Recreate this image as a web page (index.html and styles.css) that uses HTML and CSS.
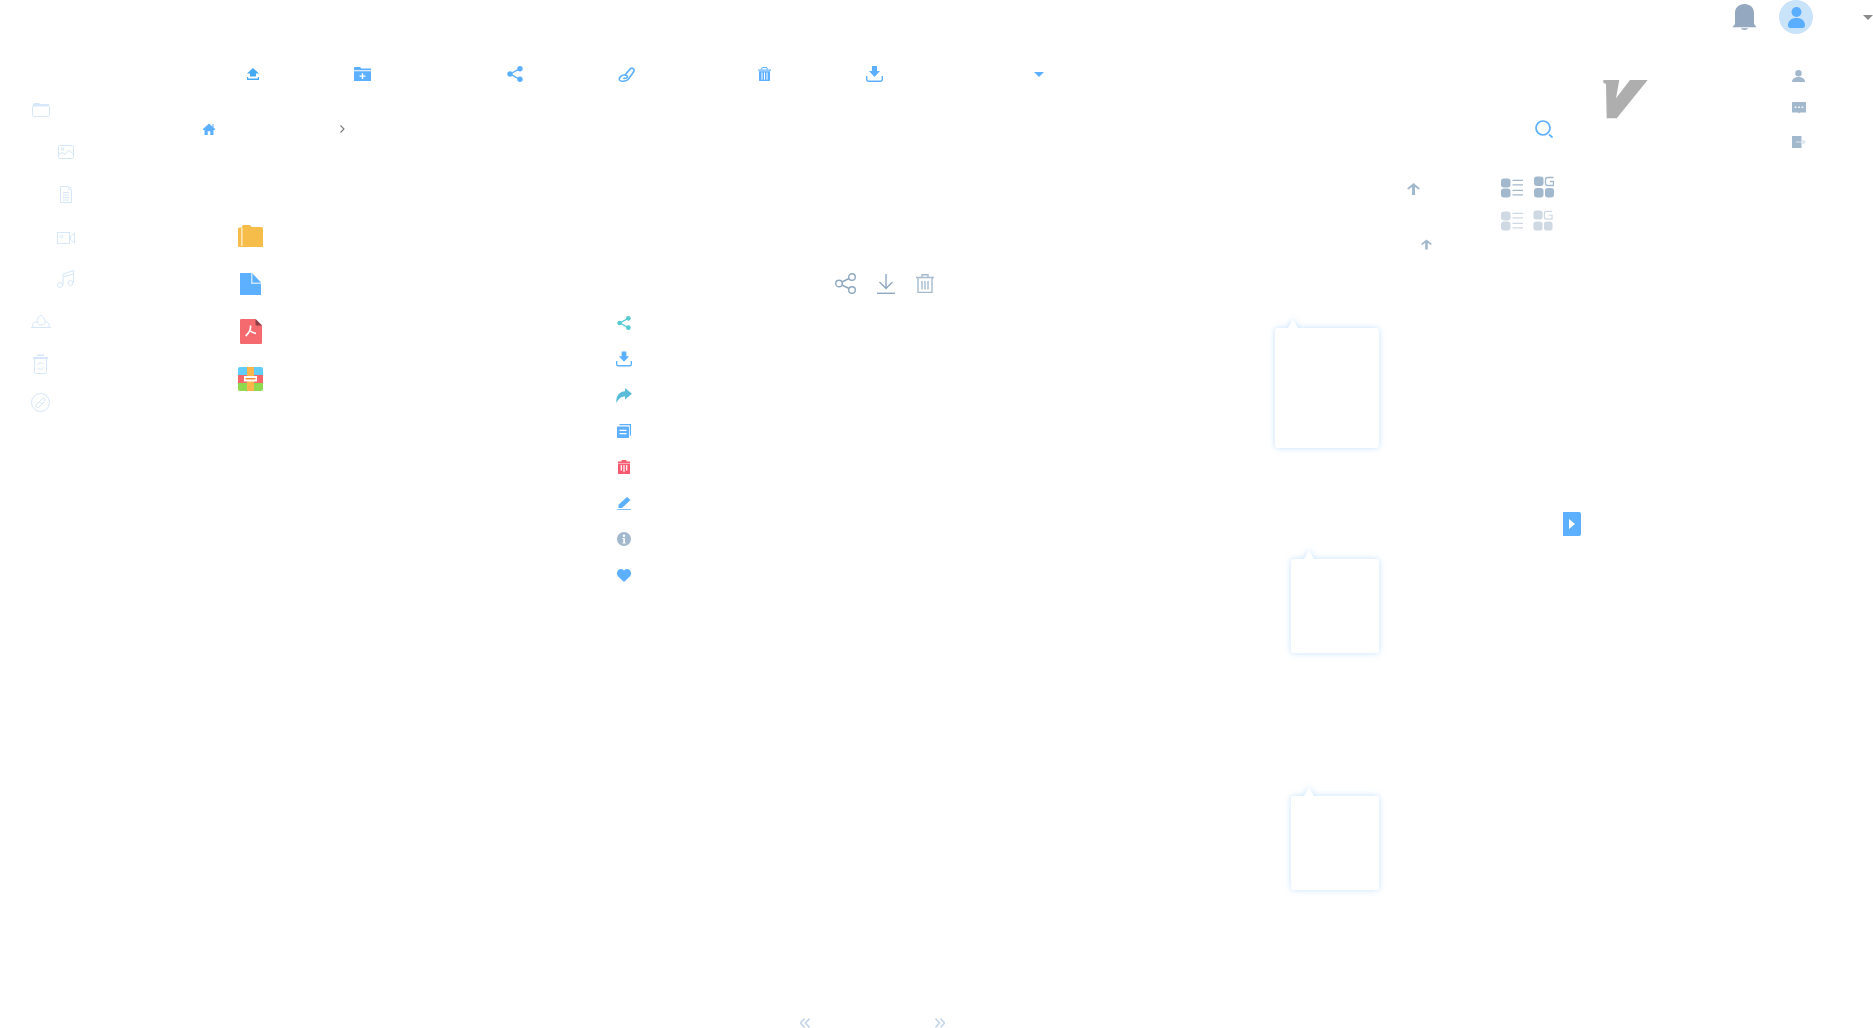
FILE: index.html
```html
<!DOCTYPE html>
<html lang="zh">
<head>
  <meta charset="UTF-8" />
  <meta name="viewport" content="width=device-width, initial-scale=1.0"/>
  <title>Files</title>
  <link rel="stylesheet" href="styles.css">
</head>
<body>
  <header class="topbar">
    <svg class="bell" width="25" height="26" viewBox="0 0 25 26"><path d="M3 19V9C3 3.500 7 0 12.500 0S22 3.500 22 9V19C22 21 23.500 21.500 24.800 23.300H.2C1.500 21.500 3 21 3 19z"/><path d="M9 24.300H16C15.500 26.500 9.500 26.500 9 24.300z"/></svg>
    <div class="avatar">
      <svg width="17" height="21" viewBox="0 0 17 21"><circle cx="8.500" cy="5" r="5"/><path d="M0 18.500C0 13.500 3.500 11 8.500 11S17 13.500 17 18.500C17 20 16 21 14.500 21H2.500C1 21 0 20 0 18.500z"/></svg>
    </div>
    <svg class="top-caret" width="10" height="5" viewBox="0 0 10 5"><path d="M0 0H10L5 5z"/></svg>
  </header>

  <div class="layout">
    <!-- sidebar -->
    <nav class="sidebar">
      <div class="nav-item nav-folder"><svg width="18" height="14" viewBox="0 0 18 14"><path class="nav-fill" d="M1 1.500C1 .5 2 0 3 0H7L8 1H16C17 1 17.500 2 17.500 3.500H.5z"/><path d="M.5 3.500V12C.5 13 1.500 13.500 2.500 13.500H15.500C16.500 13.500 17.500 13 17.500 12V3.500"/></svg></div>
      <div class="nav-item nav-sub nav-image"><svg width="16" height="14" viewBox="0 0 16 14"><rect x=".5" y=".5" width="15" height="13" rx="1"/><circle cx="4.500" cy="4" r="1.300"/><path d="M.5 10L4 7.500L7 9.500L11 5L15.500 9.500"/></svg></div>
      <div class="nav-item nav-sub nav-doc"><svg width="12" height="17" viewBox="0 0 12 17"><path d="M.5 .5H8.500L11.500 3.500V16.500H.5z"/><path d="M3 6.500H9M3 9H9M3 11.500H9M3 14H9"/><circle cx="9.500" cy="2.500" r="1.200"/></svg></div>
      <div class="nav-item nav-sub nav-video"><svg width="18" height="12" viewBox="0 0 18 12"><rect x=".5" y=".5" width="12" height="11"/><circle cx="4.500" cy="4.500" r="1.500"/><path d="M17.500 1L13.500 4.500V7.500L17.500 11z"/></svg></div>
      <div class="nav-item nav-sub"><svg width="17" height="18" viewBox="0 0 17 18"><path d="M6 15V4L16.500 .5V12.500"/><circle cx="3" cy="15" r="2.500"/><circle cx="13.500" cy="13" r="2.500"/><path d="M6 7L16.500 4"/></svg></div>
      <div class="nav-item"><svg width="20" height="13" viewBox="0 0 20 13"><path d="M0 12.500H20"/><path d="M2 12C1 9 3 6.500 6 7C6.500 3 8 .5 10 .5S13.500 3 14 7C17 6.500 19 9 18 12"/><path d="M6 7C6.500 9 8 10 10 10S13.500 9 14 7"/></svg></div>
      <div class="nav-item nav-bin"><svg width="15" height="20" viewBox="0 0 15 20"><path class="nav-fill" d="M0 3H15V5H0zM4 .5H11V2H4z"/><path d="M1.500 5V18.500C1.500 19 2 19.500 2.500 19.500H12.500C13 19.500 13.500 19 13.500 18.500V5"/><path d="M4.500 11C5 8.500 9 8 10.500 10M10.500 13C10 15.500 6 16 4.500 14"/></svg></div>
      <div class="nav-item nav-link"><svg width="19" height="19" viewBox="0 0 19 19"><circle cx="9.500" cy="9.500" r="9"/><path d="M5.500 11.500L11 6C13 4.500 15 6.500 13.500 8.500L8 14C6 15.500 4 13.500 5.500 11.500zM8.500 8.500L11 11"/></svg></div>
    </nav>

    <main class="main">
      <div class="toolbar">
        <svg class="blue-deep" width="12" height="12" viewBox="0 0 12 12"><path d="M6 0L12 5.500H9V8.500H3V5.500H0z"/><path class="tray" d="M.5 9V11.300H11.500V9"/></svg>
        <svg class="blue" width="17" height="14" viewBox="0 0 17 14"><path d="M0 1C0 .4 .4 0 1 0H6L7.500 1.500H17V3.300H0z"/><path fill-rule="evenodd" d="M0 4.300H17V14H0zM7.800 6.200V8.500H5.500V9.800H7.800V12.100H9.200V9.800H11.500V8.500H9.200V6.200z"/></svg>
        <svg class="blue" width="16" height="16" viewBox="0 0 16 16"><circle cx="13" cy="2.700" r="2.700"/><circle cx="3" cy="8" r="2.700"/><circle cx="13" cy="13.300" r="2.700"/><path class="tray" d="M13 2.700L3 8L13 13.300"/></svg>
        <svg class="blue" width="17" height="15" viewBox="0 0 17 15"><path class="link-stroke" d="M6.500 8.500L12.500 1.700C14 .5 16.500 1.500 16 4C15.500 5.500 12 10 10 12.500C8 14.500 2.500 15 1.500 13C.5 10.500 4 7.500 7 8C9 8.300 10 9.500 9 10.500C8 11.500 6 11.500 5.500 11"/></svg>
        <svg class="blue" width="13" height="14" viewBox="0 0 13 14"><path d="M3 2.500C3 .5 4.500 0 6.500 0S10 .5 10 2.500L9 2.500C9 1.300 8 1 6.500 1S4 1.300 4 2.500z"/><path d="M0 2.500H13V3.700H0z"/><path fill-rule="evenodd" d="M1 4.300H12V13C12 13.600 11.600 14 11 14H2C1.400 14 1 13.600 1 13zM3.500 5.500V12.800H4.500V5.500zM6 5.500V12.800H7V5.500zM8.500 5.500V12.800H9.500V5.500z"/></svg>
        <svg class="blue" width="17" height="16" viewBox="0 0 17 16"><path d="M6 0H11V5H14L8.500 11L3 5H6z"/><path class="tray" d="M.7 10V13.500C.7 14.500 1.300 15.200 2.300 15.200H14.700C15.700 15.200 16.300 14.500 16.300 13.500V10"/></svg>
        <svg class="blue" width="10" height="5" viewBox="0 0 10 5"><path d="M0 0H10L5 5z"/></svg>
      </div>

      <div class="crumbs">
        <svg class="blue" width="12" height="12" viewBox="0 0 12 12"><path d="M6 .5L0 6V7H1.500V12H4.700V8.200H7.300V12H10.500V7H12V6L10.500 4.600V1H9.500V3.700z"/></svg>
        <svg class="chevron" width="5" height="8" viewBox="0 0 5 8"><path d="M.5 .5L4 4L.5 7.500"/></svg>
        <svg class="search" width="18" height="18" viewBox="0 0 18 18"><circle cx="8" cy="8" r="7"/><path d="M14 14.500L17.500 17.500"/></svg>
      </div>

      <div class="sortbar">
        <svg class="sort-arrow slate" width="13" height="12" viewBox="0 0 13 12"><path d="M6.500 0L13 5.500L11.500 6.500L8 4V12H5V4L1.500 6.500L0 5.500z"/></svg>
        <svg class="slate view-list" width="22" height="20" viewBox="0 0 22 20"><rect y=".5" width="9.500" height="9" rx="3"/><rect y="10.500" width="9.500" height="9" rx="3"/><path class="view-lines" d="M11.500 2.300H22M11.500 6.800H22M11.500 12.300H22M11.500 16.800H22"/></svg>
        <svg class="slate" width="20" height="22" viewBox="0 0 20 22"><rect y=".5" width="9.500" height="9.500" rx="3"/><rect y="12" width="9.500" height="9.500" rx="3"/><rect x="11" y="12" width="9" height="9.500" rx="3"/><path class="view-lines" d="M19.500 1.500H13.500C12 1.500 11.500 2.500 11.500 4V7C11.500 8.500 12 9.500 13.500 9.500H19.500V5.500H16"/></svg>
      </div>

      <div class="files">
        <div class="file-row">
          <svg width="25" height="22" viewBox="0 0 25 22"><path fill="#f6bd4a" d="M0 4C0 3 .8 2.500 1.500 2.500H4V1.500C4 .5 5 0 6 0H11C12.500 0 13 1 13.500 2H23.500C24.500 2 25 3 25 4V20.500C25 21.500 24.500 22 23.500 22H1.500C.5 22 0 21.500 0 20.500z"/><path fill="#fbe3b2" d="M3 2.500H4.700V21H3z"/></svg>
        </div>
        <div class="file-row">
          <svg class="file-doc" width="21" height="22" viewBox="0 0 21 22"><path fill="#5cb0ff" d="M0 0H11V11H21V22H0z"/><path fill="#5cb0ff" d="M11 0H12L21 9.500V11H11z"/><path fill="#c8e3ff" d="M11 0H12.500V9.500H21V11H11z"/></svg>
          <div class="row-actions">
            <svg class="outline" width="21" height="21" viewBox="0 0 21 21"><circle cx="17" cy="4" r="3.300"/><circle cx="4" cy="10.500" r="3.300"/><circle cx="17" cy="17" r="3.300"/><path d="M14 5.500L7 9M7 12L14 15.500"/></svg>
            <svg class="outline" width="18" height="20" viewBox="0 0 18 20"><path d="M9 0V14.500M2.500 8L9 14.500L15.500 8"/><path d="M0 19.300H18"/></svg>
            <svg class="outline outline-bin" width="18" height="19" viewBox="0 0 18 19"><path d="M0 3.500H18M6 3.500V.7H12V3.500"/><path d="M2 3.500V18.500H16V3.500"/><path d="M6 7V15.500M9 7V15.500M12 7V15.500"/></svg>
          </div>
        </div>
        <div class="file-row">
          <svg class="file-doc" width="22" height="25" viewBox="0 0 22 25"><path fill="#f56a6f" d="M1.500 0H15.500L22 6.500V23.500C22 24.500 21.500 25 20.500 25H1.500C.5 25 0 24.500 0 23.500V1.500C0 .5 .5 0 1.500 0z"/><path fill="#8a4046" d="M15.500 0L22 6.500H17C16 6.500 15.500 6 15.500 5z"/><path fill="none" stroke="#fff" stroke-width="1.700" d="M10.500 6.500C11 10 9 14 5.700 17M10.500 12C12 13.500 14 14 16 14.500"/></svg>
        </div>
        <div class="file-row">
          <svg width="25" height="24" viewBox="0 0 25 24"><path fill="#5fcdf8" d="M2 0H23C24.300 0 25 .7 25 2V8H0V2C0 .7 .7 0 2 0z"/><path fill="#f5676b" d="M0 8H25V16H0z"/><path fill="#8fd94f" d="M0 16H25V22C25 23.300 24.300 24 23 24H2C.7 24 0 23.300 0 22z"/><path fill="#fdb54c" d="M9 0H16V24H9z"/><path fill="#fff" d="M6 9H19V14.500H6z"/><path fill="#f98c3a" d="M7.500 11H17.500V12.500H7.500z"/></svg>
        </div>
      </div>

      <div class="pager">
        <svg class="pager-icon" width="10" height="10" viewBox="0 0 10 10"><path d="M4.500 .5L.5 5L4.500 9.500M9.500 .5L5.500 5L9.500 9.500"/></svg>
        <svg class="pager-icon" width="10" height="10" viewBox="0 0 10 10"><path d="M.5 .5L4.500 5L.5 9.500M5.500 .5L9.500 5L5.500 9.500"/></svg>
      </div>
    </main>
  </div>

  <!-- things lying over the page -->
  <svg class="logo" width="45" height="39" viewBox="0 0 45 39"><path d="M.3 0H16.300L13 18.300L27 0H44.700L13.700 38.300H3.700L3 4L.3 2.700z"/></svg>

  <div class="user-menu">
    <svg class="slate" width="13" height="12" viewBox="0 0 13 12"><circle cx="6.500" cy="3.200" r="3.200"/><path d="M0 12C0 8.500 3 7 6.500 7S13 8.500 13 12z"/></svg>
    <svg class="slate" width="14" height="12" viewBox="0 0 14 12"><path fill-rule="evenodd" d="M1 0H13C13.600 0 14 .4 14 1V10C14 10.400 13.600 10.500 13 10.500H8L7 11.500L6 10.500H1C.4 10.500 0 10.400 0 10V1C0 .4 .4 0 1 0zM2.700 4.500V6H4.300V4.500zM6.200 4.500V6H7.800V4.500zM9.700 4.500V6H11.300V4.500z"/></svg>
    <svg class="slate menu-exit" width="14" height="12" viewBox="0 0 14 12"><path d="M0 0H9.500V12H0z"/><path class="exit-arrow" d="M4 6H12.500M10.500 4L13 6L10.500 8"/></svg>
  </div>

  <div class="context-menu">
    <div class="context-item"><svg class="teal" width="14" height="14" viewBox="0 0 16 16"><circle cx="13" cy="2.700" r="2.700"/><circle cx="3" cy="8" r="2.700"/><circle cx="13" cy="13.300" r="2.700"/><path class="tray" d="M13 2.700L3 8L13 13.300"/></svg></div>
    <div class="context-item"><svg class="blue" width="16" height="16" viewBox="0 0 17 16"><path d="M6 0H11V5H14L8.500 11L3 5H6z"/><path class="tray" d="M.7 10V13.500C.7 14.500 1.300 15.200 2.300 15.200H14.700C15.700 15.200 16.300 14.500 16.300 13.500V10"/></svg></div>
    <div class="context-item"><svg class="forward" width="16" height="15" viewBox="0 0 16 15"><path d="M9 0L16 5.800L9 11.500V8.500C5.500 8.500 2.500 10.500 .5 15C-.5 8 3.500 3.500 9 3.200z"/></svg></div>
    <div class="context-item"><svg class="blue" width="14" height="14" viewBox="0 0 14 14"><path fill-rule="evenodd" d="M1 2.500H11C11.600 2.500 12 2.900 12 3.500V13C12 13.600 11.600 14 11 14H1C.4 14 0 13.600 0 13V3.500C0 2.900 .4 2.500 1 2.500zM2.500 5.800V7H9.500V5.800zM2.500 9V10.200H9.500V9z"/><path class="tray" d="M2.500 .5H13.500V11.500"/></svg></div>
    <div class="context-item"><svg class="red" width="12" height="14" viewBox="0 0 12 14"><path d="M3.500 0H8.500V1.500H12V3H0V1.500H3.500z"/><path fill-rule="evenodd" d="M0 3.500H12V14H0zM2.700 5V10.500H3.900V5zM5.400 5V12H6.600V5zM8.100 5V10.500H9.300V5z"/></svg></div>
    <div class="context-item"><svg class="blue" width="14" height="13" viewBox="0 0 14 13"><path d="M10 0L13.500 3L5 11H1.500V7.800z"/><path d="M0 12.200H14V13H0z"/></svg></div>
    <div class="context-item"><svg class="slate" width="14" height="14" viewBox="0 0 14 14"><path fill-rule="evenodd" d="M7 0A7 7 0 1 1 7 14A7 7 0 1 1 7 0zM7 2.500A1.300 1.300 0 1 0 7 5.100A1.300 1.300 0 1 0 7 2.500zM5.500 6V7H6.300V10.500H5.500V11.500H8.800V10.500H8V6z"/></svg></div>
    <div class="context-item"><svg class="blue" width="14" height="13" viewBox="0 0 14 13"><path d="M7 13L1.200 7.500C-1.500 4.500 .5 0 4 0C5.300 0 6.300 .7 7 1.500C7.700 .7 8.700 0 10 0C13.500 0 15.500 4.500 12.800 7.500z"/></svg></div>
  </div>

  <div class="view-menu">
    <svg class="view-list" width="22" height="20" viewBox="0 0 22 20"><rect y=".5" width="9.500" height="9" rx="3"/><rect y="10.500" width="9.500" height="9" rx="3"/><path class="view-lines" d="M11.500 2.300H22M11.500 6.800H22M11.500 12.300H22M11.500 16.800H22"/></svg>
    <svg width="20" height="21" viewBox="0 0 20 22"><rect y=".5" width="9.500" height="9.500" rx="3"/><rect y="12" width="9.500" height="9.500" rx="3"/><rect x="11" y="12" width="9" height="9.500" rx="3"/><path class="view-lines" d="M19.500 1.500H13.500C12 1.500 11.500 2.500 11.500 4V7C11.500 8.500 12 9.500 13.500 9.500H19.500V5.500H16"/></svg>
  </div>
  <svg class="sort-menu slate" width="11" height="11" viewBox="0 0 13 12"><path d="M6.500 0L13 5.500L11.500 6.500L8 4V12H5V4L1.500 6.500L0 5.500z"/></svg>

  <div class="popover pop-wide"></div>
  <div class="popover pop-mid"></div>
  <div class="popover pop-low"></div>

  <div class="side-tab"></div>
</body>
</html>
```

FILE: styles.css
```css
html, body {
  margin: 0;
  height: 100%;
}

body {
  position: relative;
  height: 1028px;
  overflow: hidden;
  background-color: #fff;
  font-family: "Liberation Sans", Arial, sans-serif;
}

svg {
  display: block;
  flex: none;
  fill: currentColor;
}

.blue { color: #5cb0ff; }
.blue-deep { color: #45a8f3; }
.slate { color: #a2b8cc; }
.teal { color: #56cbd2; }
.forward { color: #5bbcd9; }
.red { color: #fa5a72; }

.tray {
  fill: none;
  stroke: currentColor;
  stroke-width: 1.4;
}

.link-stroke {
  fill: none;
  stroke: currentColor;
  stroke-width: 1.6;
}

/* top bar */
.topbar {
  height: 34px;
  display: flex;
  justify-content: flex-end;
  align-items: center;
}

.bell {
  color: #94a9bf;
  margin-right: 22px;
}

.avatar {
  width: 34px;
  height: 34px;
  border-radius: 50%;
  background-color: #c9e3fb;
  color: #5badff;
  display: flex;
  justify-content: center;
  align-items: center;
  margin-right: 50px;
}

.top-caret { color: #8b8b8b; }

/* page columns */
.layout {
  display: grid;
  grid-template-columns: 140px 1fr;
  height: 994px;
}

.sidebar {
  padding-top: 55px;
  display: flex;
  flex-direction: column;
}

.nav-item {
  height: 42.3px;
  display: flex;
  align-items: center;
  padding-left: 31px;
  color: #d6e7fa;
}

.nav-item svg {
  fill: none;
  stroke: currentColor;
  stroke-width: 1;
}

.nav-item .nav-fill {
  fill: currentColor;
  stroke: none;
}

.nav-sub { padding-left: 57px; }
.nav-folder svg { margin-left: 1px; }
.nav-image svg { margin-left: 1px; }
.nav-doc svg { margin-left: 3px; }
.nav-video svg { margin-top: 2px; }
.nav-bin svg { margin-left: 2px; }
.nav-link svg { margin-top: -7px; }

.main {
  display: flex;
  flex-direction: column;
  min-width: 0;
}

/* toolbar */
.toolbar {
  display: grid;
  grid-template-columns: 107px 153px 111px 140px 108px 168px auto;
  justify-content: start;
  align-items: center;
  height: 16px;
  margin-top: 32px;
  padding-left: 107px;
}

.crumbs {
  display: flex;
  align-items: center;
  height: 18px;
  margin-top: 38px;
  padding: 0 320px 0 63px;
}

.chevron {
  fill: none;
  stroke: #777;
  stroke-width: 1.1;
  margin-left: 125px;
}

.search {
  fill: none;
  stroke: #5cb0ff;
  stroke-width: 1.7;
  margin-left: auto;
}

/* sort and view switch */
.sortbar {
  display: flex;
  justify-content: flex-end;
  align-items: center;
  gap: 11px;
  height: 22px;
  margin-top: 38px;
  padding-right: 319px;
}

.sort-arrow {
  margin: 4px 70px 0 0;
}

.view-list { align-self: flex-end; }

.view-lines {
  fill: none;
  stroke: currentColor;
  stroke-width: 1.3;
}

/* file list */
.files {
  margin-top: 14.5px;
  padding-left: 98px;
}

.file-row {
  height: 47.5px;
  display: flex;
  align-items: center;
}

.file-doc { margin-left: 2px; }

.row-actions {
  display: flex;
  align-items: center;
  gap: 21px;
  margin-left: 574px;
}

.outline {
  fill: none;
  stroke: #8ea8c0;
  stroke-width: 1.4;
}

.outline-bin { stroke: #a6bbce; }

.pager {
  margin-top: auto;
  display: flex;
  gap: 125px;
  padding-left: 660px;
}

.pager-icon {
  fill: none;
  stroke: #c3d5e8;
  stroke-width: 1.6;
}

/* overlays */
.logo {
  position: absolute;
  left: 1603px;
  top: 80px;
  color: #aeaeae;
}

.user-menu {
  position: absolute;
  left: 1792px;
  top: 70px;
  display: flex;
  flex-direction: column;
  gap: 20px;
}

.menu-exit { margin-top: 2px; }

.exit-arrow {
  fill: none;
  stroke: #dbe5ee;
  stroke-width: 1.2;
}

.context-menu {
  position: absolute;
  left: 617px;
  top: 305px;
  width: 14px;
  display: flex;
  flex-direction: column;
}

.context-item {
  height: 36px;
  display: flex;
  justify-content: center;
  align-items: center;
}

.view-menu {
  position: absolute;
  left: 1501px;
  top: 210px;
  display: flex;
  gap: 10px;
  color: #cfd9e3;
}

.sort-menu {
  position: absolute;
  left: 1421px;
  top: 239px;
}

.popover {
  position: absolute;
  right: 494px;
  background-color: #fff;
  border-radius: 3px;
  filter: drop-shadow(0 0 3px rgba(150, 200, 255, 0.55));
}

.popover::before {
  content: "";
  position: absolute;
  left: 13px;
  top: -9px;
  border: 5px solid transparent;
  border-top: 0;
  border-bottom: 9px solid #fff;
}

.pop-wide {
  top: 328px;
  width: 104px;
  height: 120px;
}

.pop-mid {
  top: 559px;
  width: 88px;
  height: 94px;
}

.pop-low {
  top: 796px;
  width: 88px;
  height: 94px;
}

.side-tab {
  position: absolute;
  left: 1563px;
  top: 512px;
  width: 18px;
  height: 24px;
  background-color: #5cb0ff;
  border-radius: 0 2px 2px 0;
}

.side-tab::after {
  content: "";
  position: absolute;
  left: 6px;
  top: 7px;
  border: 5px solid transparent;
  border-right: 0;
  border-left: 6px solid #fff;
}
```
